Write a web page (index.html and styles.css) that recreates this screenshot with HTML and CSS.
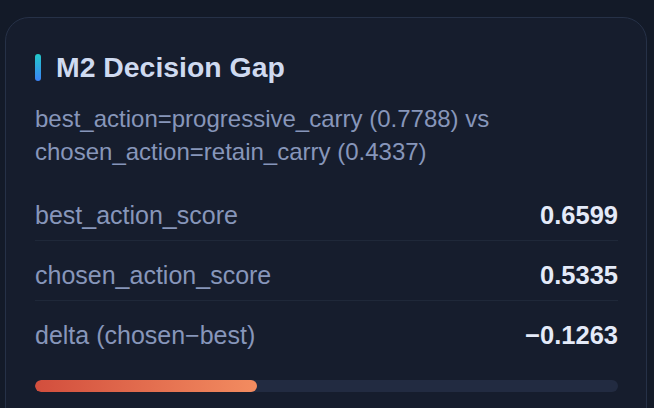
FILE: index.html
```html
<!DOCTYPE html>
<html lang="en">
<head>
<meta charset="utf-8">
<title>M2 Decision Gap</title>
<link rel="stylesheet" href="styles.css">
</head>
<body>
<section class="card">
  <header class="card-head">
    <span class="accent"></span>
    <h2 class="title">M2 Decision Gap</h2>
  </header>
  <p class="summary">best_action=progressive_carry (0.7788) vs<br>chosen_action=retain_carry (0.4337)</p>
  <div class="rows">
    <div class="row"><span class="label">best_action_score</span><span class="value">0.6599</span></div>
    <div class="row"><span class="label">chosen_action_score</span><span class="value">0.5335</span></div>
    <div class="row"><span class="label">delta (chosen−best)</span><span class="value">−0.1263</span></div>
  </div>
  <div class="track"><div class="fill" style="width:38%"></div></div>
</section>
</body>
</html>
```
FILE: styles.css
```css
html, body {
  margin: 0;
  height: 100%;
  overflow: hidden;
}
body {
  background: #131a28;
  padding: 17px 7px 0 5px;
  box-sizing: border-box;
  font-family: "Liberation Sans", Arial, sans-serif;
}
.card {
  background: #161d2d;
  border: 1px solid #263147;
  border-radius: 24px;
  padding: 33px 28px 40px 29px;
}
.card-head {
  display: flex;
  align-items: center;
  gap: 15px;
  height: 32px;
}
.accent {
  width: 6px;
  height: 27px;
  border-radius: 3px;
  background: linear-gradient(180deg, #22c9c9 0%, #3b82f6 100%);
}
.title {
  margin: 0;
  font-size: 28.4px;
  font-weight: 600;
  color: #cfdaf0;
  line-height: 32px;
}
.summary {
  margin: 19px 0 0;
  font-size: 24px;
  line-height: 33px;
  color: #8796ba;
}
.rows {
  margin-top: 13px;
}
.row {
  display: flex;
  justify-content: space-between;
  align-items: center;
  line-height: 30px;
  padding: 19px 0 10px;
  border-bottom: 1px solid #1f2839;
}
.row:last-child {
  border-bottom: none;
}
.label {
  font-size: 25px;
  color: #8796ba;
}
.value {
  font-size: 25.5px;
  font-weight: 700;
  color: #e4eaf8;
}
.track {
  margin-top: 20px;
  height: 12px;
  border-radius: 6px;
  background: #222b41;
  overflow: hidden;
}
.fill {
  height: 100%;
  border-radius: 6px;
  background: linear-gradient(90deg, #d24e3d 0%, #f38c60 100%);
}
```
